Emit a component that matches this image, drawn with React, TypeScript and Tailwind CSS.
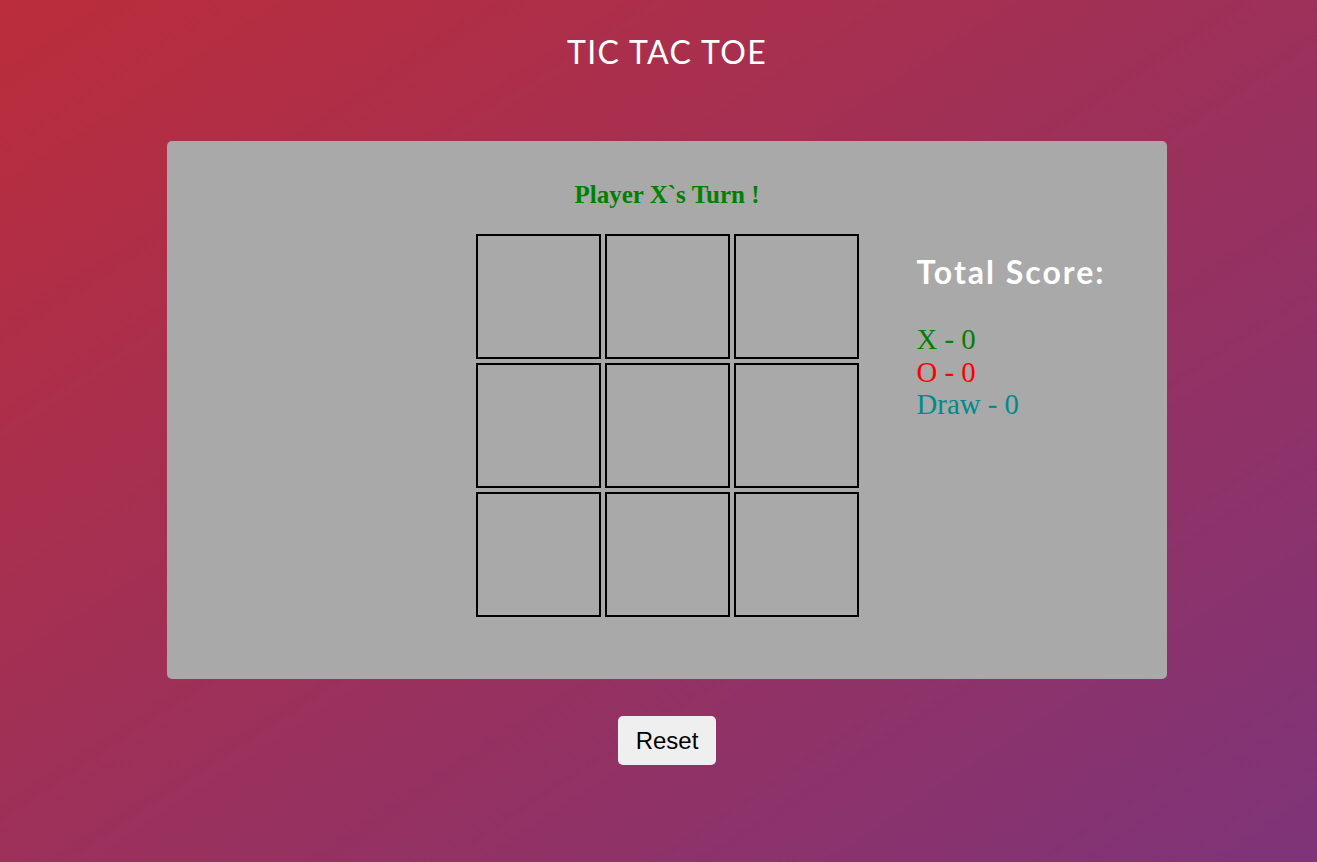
import { useState } from 'react';

const comic = "font-['Comic_Sans_MS','Lato',sans-serif]";

export default function App() {
  const [cells, setCells] = useState<string[]>(Array(9).fill(''));
  const [turn, setTurn] = useState<'X' | 'O'>('X');

  const play = (i: number) => {
    if (cells[i]) return;
    const next = [...cells];
    next[i] = turn;
    setCells(next);
    setTurn(turn === 'X' ? 'O' : 'X');
  };

  return (
    <div className="min-h-screen w-full bg-[linear-gradient(to_bottom_right,#bb2d3b,#7e3479)] pl-[17px] flex flex-col items-center">
      <h1 className={`${comic} mt-[32px] text-[32px] leading-[40px] tracking-[1.4px] text-white`}>TIC TAC TOE</h1>

      <div className="mt-[69px] w-[1000px] h-[538px] rounded-[5px] bg-[#a9a9a9] pt-[40px]">
        <p className="text-center font-['Liberation_Serif',serif] font-bold text-[25px] leading-[28px] text-[#008000]">
          Player {turn}`s Turn !
        </p>

        <div className="mt-[25px] grid grid-cols-[1fr_auto_1fr]">
          <div />
          <div className="grid grid-cols-[125px_125px_125px] grid-rows-[125px_125px_125px] gap-x-[4px] gap-y-[4px]">
            {cells.map((c, i) => (
              <button
                key={i}
                onClick={() => play(i)}
                className="border-2 border-black bg-[#a9a9a9] font-['Liberation_Serif',serif] text-[60px]"
              >
                {c}
              </button>
            ))}
          </div>
          <div className="pl-[58px] pt-[18px]">
            <h2 className={`${comic} font-bold text-[32px] leading-[40px] tracking-[2px] text-white`}>Total Score:</h2>
            <div className="mt-[31px] font-['Liberation_Serif',serif] text-[28.8px] leading-[32.5px]">
              <div className="text-[#008000]">X - 0</div>
              <div className="text-[#ff0000]">O - 0</div>
              <div className="text-[#008b8b]">Draw - 0</div>
            </div>
          </div>
        </div>
      </div>

      <button
        onClick={() => {
          setCells(Array(9).fill(''));
          setTurn('X');
        }}
        className="mt-[37px] h-[49px] w-[98px] rounded-[5px] bg-[#efefef] font-['Liberation_Sans',sans-serif] text-[24px] text-black"
      >
        Reset
      </button>
    </div>
  );
}
